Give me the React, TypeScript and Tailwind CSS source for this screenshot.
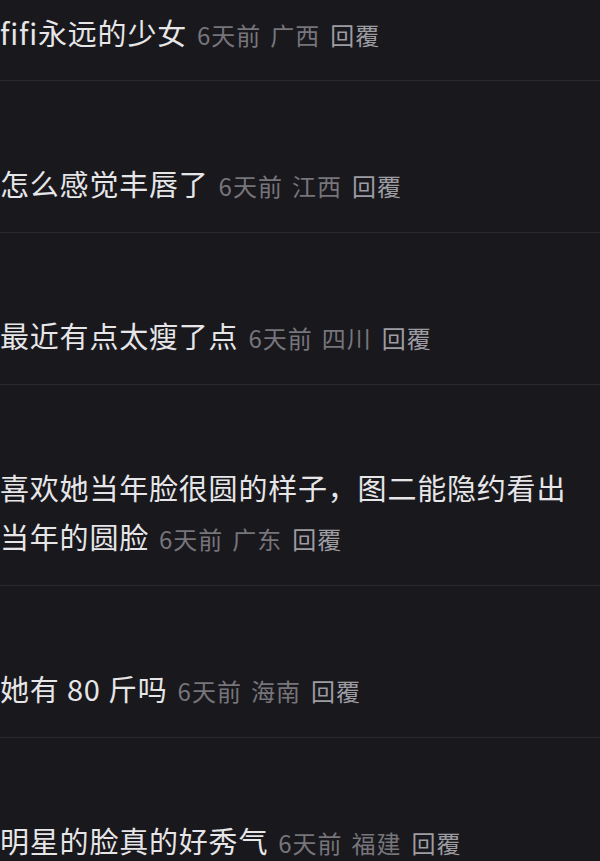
import React from "react";

type Row = { text: string; place: string; first?: boolean; last?: boolean; wrapPad?: boolean };

const rows: Row[] = [
  { text: "fifi永远的少女", place: "广西", first: true },
  { text: "怎么感觉丰唇了", place: "江西" },
  { text: "最近有点太瘦了点", place: "四川" },
  { text: "喜欢她当年脸很圆的样子，图二能隐约看出当年的圆脸", place: "广东", wrapPad: true },
  { text: "她有 80 斤吗", place: "海南" },
  { text: "明星的脸真的好秀气", place: "福建", last: true },
];

export default function App() {
  return (
    <div
      className="w-[600px] h-[861px] overflow-hidden bg-[#19181d]"
      style={{ fontFamily: '"Noto Sans CJK SC", "Noto Sans", sans-serif' }}
    >
      {rows.map((r, i) => (
        <div
          key={i}
          className={
            (r.first ? "pt-[8px] pb-[23px] " : "pt-[78px] pb-[24px] ") +
            (r.last ? "" : "border-b border-[#2a292f] ") +
            (r.wrapPad ? "pr-[20px]" : "pr-0")
          }
        >
          <p className="text-[29px] leading-[49px] tracking-[0.8px] text-[#e6e6e8]">
            {r.text}
            <span className="ml-[10px] text-[24px] leading-none tracking-[1px] text-[#76757b]">6天前</span>
            <span className="ml-[9px] text-[24px] leading-none tracking-[1px] text-[#76757b]">{r.place}</span>
            <span className="ml-[10px] text-[24px] leading-none tracking-[1px] text-[#9d9ca2]">回覆</span>
          </p>
        </div>
      ))}
    </div>
  );
}
